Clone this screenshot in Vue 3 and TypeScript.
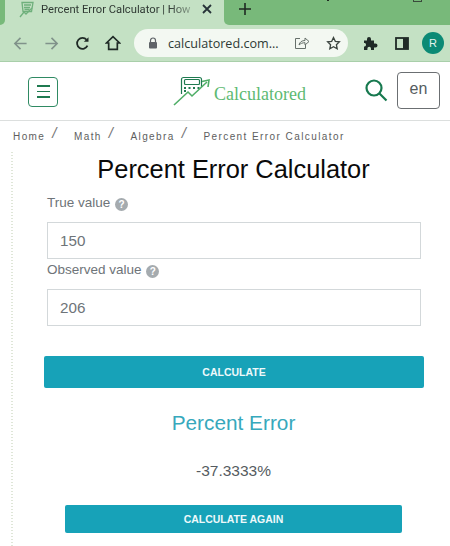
<script setup lang="ts">
const crumbs: string[] = ['Home', 'Math', 'Algebra']
</script>

<template>
  <div class="page">
    <div class="tabstrip">
      <div class="strip-left"></div>
      <div class="tab">
        <svg class="favicon" width="18" height="18" viewBox="0 0 18 18" fill="none" stroke="#6fb07c" stroke-width="1.300">
          <path d="M4 1.500h11l-1.500 9H5z" />
          <path d="M6 4h7M6 6.500h6M6.500 8.500h5" />
          <path d="M2 16l4-5 2 2 6-6" />
        </svg>
        <span class="tab-title">Percent Error Calculator | How</span>
        <svg class="tab-close" width="10" height="10" viewBox="0 0 10 10" stroke="#263238" stroke-width="1.800">
          <path d="M1 1l8 8M9 1l-8 8" />
        </svg>
      </div>
      <div class="strip-right">
        <svg class="new-tab" width="14" height="14" viewBox="0 0 14 14" stroke="#1f2a22" stroke-width="1.600">
          <path d="M7 1v12M1 7h12" />
        </svg>
        <span class="win-min"></span>
        <span class="win-max"></span>
      </div>
    </div>

    <div class="toolbar">
      <svg class="tool back" width="15" height="15" viewBox="0 0 16 16" fill="none" stroke="#80928a" stroke-width="1.700">
        <path d="M14.500 8H2M8 2L2 8l6 6" />
      </svg>
      <svg class="tool forward" width="15" height="15" viewBox="0 0 16 16" fill="none" stroke="#80928a" stroke-width="1.700">
        <path d="M1.500 8H14M8 2l6 6-6 6" />
      </svg>
      <svg class="tool reload" width="15" height="15" viewBox="0 0 16 16" fill="none" stroke="#1f2a26" stroke-width="1.900">
        <path d="M13.300 10.200A5.800 5.800 0 1 1 12.400 4" />
        <path d="M14.400 1.200v5h-5z" fill="#1f2a26" stroke="none" />
      </svg>
      <svg class="tool home" width="16" height="16" viewBox="0 0 17 17" fill="none" stroke="#1f2a26" stroke-width="1.800">
        <path d="M1.500 8.500L8.500 1.800l7 6.700h-2.400v6.700H3.900V8.500z" />
      </svg>
      <div class="omnibox">
        <svg class="lock" width="10" height="12" viewBox="0 0 10 12">
          <path d="M2.500 5V3.500a2.500 2.500 0 0 1 5 0V5" fill="none" stroke="#5f6368" stroke-width="1.200" />
          <rect x="1" y="5" width="8" height="6.500" rx="1" fill="#5f6368" />
        </svg>
        <span class="url">calculatored.com...</span>
        <svg class="share" width="16" height="14" viewBox="0 0 16 14" fill="none" stroke="#66706b" stroke-width="1">
          <path d="M6 2.500H1.500v10h10V9" />
          <path d="M5 9c.5-3 3-4.500 6-4.500V2l4 3.500L11 9V6.700C8.500 6.700 6.500 7.500 5 9z" />
        </svg>
        <svg class="star" width="15" height="14" viewBox="0 0 15 14" fill="none" stroke="#3c4540" stroke-width="1.300">
          <path d="M7.500 1.500l1.800 3.800 4.100.5-3 2.900.8 4.100-3.700-2-3.700 2 .8-4.100-3-2.900 4.100-.5z" />
        </svg>
      </div>
      <svg class="tool puzzle" width="15" height="15" viewBox="0 0 15 15">
        <path d="M1 4.500h3V3a2 2 0 0 1 4 0v1.500h3v3h1.500a2 2 0 0 1 0 4H11V14H8v-1.500a1.800 1.800 0 0 0-3.600 0V14H1v-3.500h1a2 2 0 0 0 0-3.500H1z" fill="#1f2a26" />
      </svg>
      <svg class="tool panel" width="14" height="13" viewBox="0 0 14 13">
        <rect x="1" y="1" width="12" height="11" fill="none" stroke="#1f2a26" stroke-width="1.800" />
        <rect x="8" y="1" width="5" height="11" fill="#1f2a26" />
      </svg>
      <div class="avatar">R</div>
    </div>
    <div class="chrome-line"></div>

    <header class="site-header">
      <button class="menu-btn" type="button" aria-label="Menu">
        <span></span><span></span><span></span>
      </button>
      <div class="logo">
        <svg width="38" height="31" viewBox="0 0 38 31" fill="none">
          <path d="M8.500 18V3.500a2 2 0 0 1 2-2h16a2 2 0 0 1 2 2V11" stroke="#1f7a50" stroke-width="1.200" />
          <rect x="11.500" y="3.500" width="15" height="5" rx="1" stroke="#1f7a50" stroke-width="1.200" />
          <path d="M11 12h2M15.500 12h2M20 12h2M24.500 12h2M11 15h2" stroke="#1f7a50" stroke-width="1.800" />
          <path d="M1 29l14-13 4 4 15-14" stroke="#4fae67" stroke-width="1.600" />
          <path d="M29 5.500l7-1.500-1 7" stroke="#4fae67" stroke-width="1.600" />
        </svg>
        <span class="logo-text">Calculatored</span>
      </div>
      <svg class="search" width="24" height="24" viewBox="0 0 24 24" fill="none" stroke="#17794f" stroke-width="2.200">
        <circle cx="10" cy="10" r="7.500" />
        <path d="M15.500 15.500l7 7" />
      </svg>
      <div class="lang">en</div>
    </header>

    <nav class="breadcrumb">
      <template v-for="c in crumbs" :key="c">
        <span class="crumb">{{ c }}</span>
        <span class="sep">/</span>
      </template>
      <span class="crumb">Percent Error Calculator</span>
    </nav>

    <main class="content">
      <h1>Percent Error Calculator</h1>
      <div class="form">
        <label class="field-label">True value <i class="help">?</i></label>
        <div class="input">150</div>
        <label class="field-label second">Observed value <i class="help">?</i></label>
        <div class="input">206</div>
      </div>
      <button class="btn calc" type="button">CALCULATE</button>
      <h2>Percent Error</h2>
      <p class="result">-37.3333%</p>
      <button class="btn again" type="button">CALCULATE AGAIN</button>
    </main>
  </div>
</template>

<style scoped>
.page {
  width: 450px;
  height: 546px;
  overflow: hidden;
  background: #fff;
  font-family: "Liberation Sans", Arial, sans-serif;
}
.tabstrip {
  height: 25px;
  background: #c4e1c4;
  display: flex;
}
.strip-left {
  width: 5px;
  background: #78b97a;
  border-bottom-right-radius: 5px;
  flex: none;
}
.tab {
  width: 219px;
  display: flex;
  align-items: flex-start;
  padding: 1px 0 0 13px;
  box-sizing: border-box;
  flex: none;
}
.favicon {
  flex: none;
  margin-right: 5px;
}
.tab-title {
  width: 153px;
  margin-top: 1px;
  white-space: nowrap;
  overflow: hidden;
  font-family: Roboto, sans-serif;
  font-size: 11.200px;
  line-height: 16px;
  color: #303a34;
  -webkit-mask-image: linear-gradient(to right, #000 84%, rgba(0, 0, 0, 0.25));
  mask-image: linear-gradient(to right, #000 84%, rgba(0, 0, 0, 0.25));
}
.tab-close {
  margin: 3px 0 0 8px;
}
.strip-right {
  flex: 1;
  background: #78b97a;
  border-bottom-left-radius: 5px;
  position: relative;
  padding-left: 14px;
}
.new-tab {
  display: block;
  margin-top: 2px;
}
.win-min {
  position: absolute;
  left: 103px;
  top: 0;
  width: 2px;
  height: 1px;
  background: #1f2a22;
}
.win-max {
  position: absolute;
  left: 189px;
  top: 0;
  width: 9px;
  height: 2px;
  box-sizing: border-box;
  border: 1px solid #3a4a3c;
  border-top: none;
}
.toolbar {
  height: 36px;
  background: #c4e1c4;
  display: flex;
  align-items: center;
}
.tool {
  flex: none;
}
.back { margin-left: 13px; }
.forward { margin-left: 16px; }
.reload { margin-left: 16px; }
.home { margin-left: 15px; }
.omnibox {
  width: 214px;
  height: 28px;
  margin-left: 13px;
  background: #f3f8f2;
  border-radius: 14px;
  display: flex;
  align-items: center;
  box-sizing: border-box;
  padding-left: 14px;
  flex: none;
}
.lock { flex: none; }
.url {
  margin-left: 10px;
  font-family: "Open Sans", sans-serif;
  font-size: 12.600px;
  color: #2e3a35;
  white-space: nowrap;
  width: 112px;
}
.share { margin-left: 14px; flex: none; }
.star { margin-left: 16px; flex: none; }
.puzzle { margin-left: 15px; }
.panel { margin-left: 17px; }
.avatar {
  width: 22px;
  height: 22px;
  border-radius: 50%;
  background: #0b8a75;
  color: #e4f4ee;
  font-size: 11px;
  line-height: 22px;
  text-align: center;
  margin-left: 13px;
  flex: none;
}
.chrome-line {
  height: 1px;
  background: #a9cfaa;
}
.site-header {
  height: 57px;
  padding-top: 1px;
  border-bottom: 1px solid #dcdfde;
  box-sizing: content-box;
  display: flex;
  align-items: center;
}
.menu-btn {
  width: 30px;
  height: 30px;
  margin-left: 28px;
  padding: 0;
  background: #fff;
  border: 1.500px solid #2f8a63;
  border-radius: 4px;
  display: flex;
  flex-direction: column;
  align-items: center;
  justify-content: center;
  gap: 4px;
  box-sizing: border-box;
  flex: none;
}
.menu-btn span {
  display: block;
  width: 13px;
  height: 1.500px;
  background: #1f7a50;
}
.logo {
  display: flex;
  align-items: flex-end;
  margin-left: 115px;
  width: 135px;
  flex: none;
}
.logo-text {
  font-family: "Liberation Serif", serif;
  font-size: 18px;
  color: #5dba72;
  margin-left: 3px;
  line-height: 22px;
  margin-bottom: 2px;
  white-space: nowrap;
}
.search {
  margin-left: 56px;
  margin-top: -3px;
  flex: none;
}
.lang {
  width: 43px;
  height: 37px;
  margin-left: 9px;
  margin-top: -3px;
  border: 1.500px solid #6b6f72;
  border-radius: 4px;
  box-sizing: border-box;
  color: #555c60;
  font-size: 16px;
  display: flex;
  align-items: center;
  justify-content: center;
  padding-bottom: 2px;
  flex: none;
}
.breadcrumb {
  height: 30px;
  padding-left: 13px;
  display: flex;
  align-items: center;
  font-size: 10px;
  letter-spacing: 1.420px;
  color: #5e5e5e;
  white-space: nowrap;
  box-sizing: border-box;
}
.sep {
  font-size: 15px;
  letter-spacing: 0;
  margin: -7px 17.400px 0 7px;
  color: #777;
  font-style: italic;
}
.content {
  margin-left: 11px;
  padding-left: 6px;
  height: 396px;
  box-sizing: border-box;
  position: relative;
  display: flex;
  flex-direction: column;
  background-image: radial-gradient(circle, #dfe6d8 0.8px, transparent 1px);
  background-size: 2px 3px;
  background-repeat: repeat-y;
}
h1 {
  margin: 4px 0 0;
  text-align: center;
  font-size: 25.400px;
  line-height: 28px;
  font-weight: 400;
  color: #0a0a0a;
  white-space: nowrap;
}
.form {
  margin-left: 30px;
  width: 374px;
  margin-top: 10px;
}
.field-label {
  display: block;
  height: 20px;
  line-height: 20px;
  font-size: 13.500px;
  color: #6e7479;
}
.second {
  margin-top: 1px;
}
.help {
  display: inline-block;
  width: 13px;
  height: 13px;
  border-radius: 50%;
  background: #a5abaf;
  color: #fff;
  font-style: normal;
  font-weight: 700;
  font-size: 10px;
  line-height: 13px;
  text-align: center;
  vertical-align: -1px;
  margin-left: 1px;
}
.input {
  height: 37px;
  margin-top: 9px;
  border: 1px solid #d3d8da;
  box-sizing: border-box;
  padding-left: 12px;
  line-height: 35px;
  font-size: 15.200px;
  color: #6e7479;
  background: #fff;
}
.btn {
  display: block;
  border: none;
  padding: 0;
  background: #17a2b8;
  color: #eef9fb;
  font-family: inherit;
  font-size: 10.500px;
  font-weight: 700;
  border-radius: 2px;
  text-align: center;
}
.calc {
  margin-left: 27px;
  margin-top: 30px;
  width: 380px;
  height: 32px;
}
h2 {
  margin: 23px 0 0;
  text-align: center;
  font-size: 20.800px;
  line-height: 24px;
  font-weight: 400;
  color: #37a8bc;
}
.result {
  margin: 27px 0 0;
  text-align: center;
  font-size: 15.500px;
  line-height: 18px;
  color: #555b60;
}
.again {
  margin-left: 48px;
  margin-top: 25px;
  width: 337px;
  height: 28px;
}
</style>

<style>
html, body { margin: 0; background: #fff; }
</style>
